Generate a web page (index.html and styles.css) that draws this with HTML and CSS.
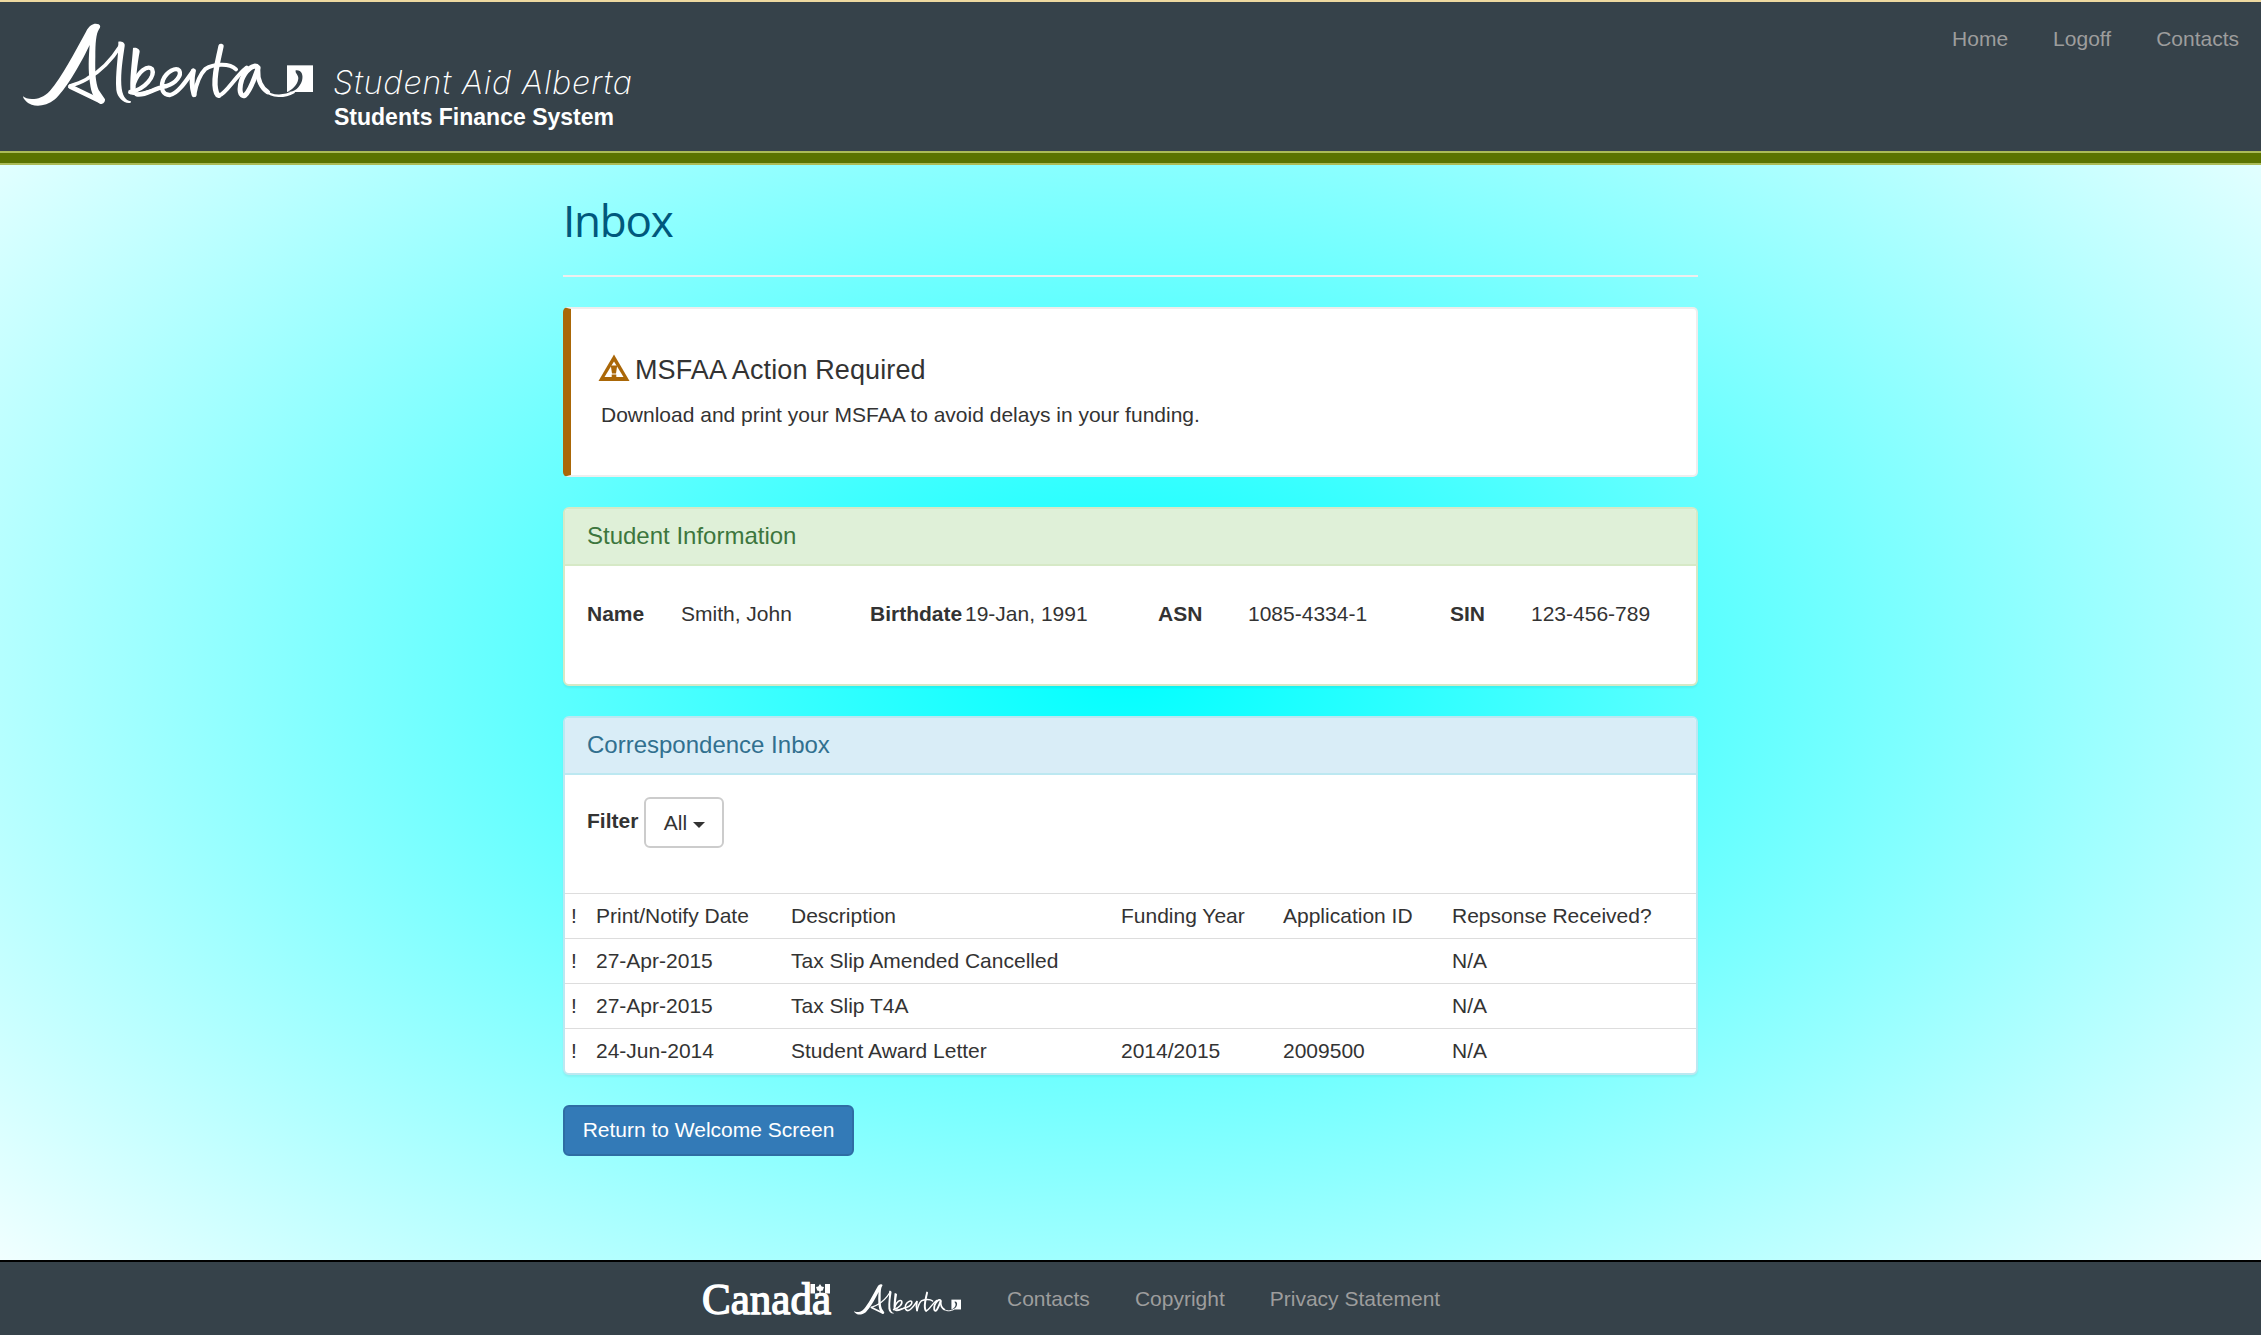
FILE: index.html
```html
<!DOCTYPE html>
<html lang="en">
<head>
<meta charset="utf-8">
<title>Inbox - Students Finance System</title>
<link rel="stylesheet" href="styles.css">
</head>
<body>
<svg class="symbols" aria-hidden="true">
  <symbol id="alberta" viewBox="66 69 876 252">
    <path d="M69,289 C80,300 120,305 150,272 C185,232 225,155 258,95 C270,72 284,69 296,73 C302,76 302,82 297,88 C288,102 286,130 286,170 C285,215 286,245 296,270 L315,298 C316,308 306,315 300,311 C285,302 273,280 270,250 C264,210 266,170 269,135 C235,205 195,270 165,298 C140,318 112,320 95,314 C82,310 70,298 69,289Z"/>
    <path d="M355,125 C365,124 376,128 374,138 C368,180 362,215 364,255 C366,285 376,302 393,304 L392,308 C375,313 352,295 349,270 C345,220 356,170 355,125Z"/>
    <path d="M399,144 C408,141 420,147 419,155 C412,190 407,240 407,270 L392,280 C388,240 396,190 399,144Z"/>
    <g fill="none" stroke="#fff" stroke-linecap="round" stroke-linejoin="round">
      <path stroke-width="14" d="M303,304 L211,260"/>
      <path stroke-width="11" d="M211,258 C225,252 245,247 262,236 C300,215 335,180 361,138"/>
      <path stroke-width="13" d="M402,250 C415,215 442,194 456,207 C466,228 436,268 391,276"/>
      <path stroke-width="8" d="M389,278 C412,290 450,270 490,262"/>
      <path stroke-width="13" d="M410,283 C440,288 455,266 500,258 C530,248 545,225 538,212 C528,200 500,215 489,240 C480,268 490,286 510,285 C535,280 560,240 580,212"/>
      <path stroke-width="15" d="M580,213 C575,235 575,260 582,284"/>
      <path stroke-width="12" d="M583,284 C588,255 598,225 616,207 C640,192 688,188 708,208"/>
      <path stroke-width="16" d="M663,139 C656,175 643,215 645,255 C646,272 650,284 656,286"/>
      <path stroke-width="12" d="M657,287 C680,280 705,230 740,203"/>
      <path stroke-width="15" d="M774,203 C762,188 735,212 725,240 C716,268 720,292 735,286 C752,272 762,235 774,206"/>
      <path stroke-width="14" d="M774,210 C772,240 785,265 803,276"/>
      <path stroke-width="8" d="M795,270 C815,294 855,290 881,276"/>
    </g>
    <path d="M861,196H939V276H861Z"/>
    <path fill="#36424a" d="M887,211 C904,209 911,224 906,242 C899,262 885,276 862,276 C884,265 894,250 895,235 C895,224 885,221 887,211Z"/>
  </symbol>
</svg>

<header class="site-header">
  <div class="brand">
    <svg class="brand-mark" role="img" aria-label="Alberta"><use href="#alberta"/></svg>
    <svg class="brand-name" viewBox="0 0 310 60">
      <text class="brand-aid" x="0" y="30" textLength="299" lengthAdjust="spacing">Student Aid Alberta</text>
      <text class="brand-system" x="1" y="61" textLength="280" lengthAdjust="spacingAndGlyphs">Students Finance System</text>
    </svg>
  </div>
  <nav class="top-nav">
    <a>Home</a><a>Logoff</a><a>Contacts</a>
  </nav>
</header>

<main class="container">
  <h1>Inbox</h1>

  <section class="callout">
    <h2><svg class="warning" viewBox="0 0 32 28"><path fill="#aa6708" d="M16,0.5 L31.5,27 H0.5Z"/><path fill="#fff" d="M16,7.5 L25.5,23 H6.5Z"/><path fill="#aa6708" d="M12.8,11.5 H19.2 L18,19.5 H14Z M13.7,20.5 H18.3 V23.5 H13.7Z"/></svg>MSFAA Action Required</h2>
    <p>Download and print your MSFAA to avoid delays in your funding.</p>
  </section>

  <section class="panel panel-success">
    <h3>Student Information</h3>
    <dl class="student">
      <dt>Name</dt><dd>Smith, John</dd>
      <dt>Birthdate</dt><dd>19-Jan, 1991</dd>
      <dt>ASN</dt><dd>1085-4334-1</dd>
      <dt>SIN</dt><dd>123-456-789</dd>
    </dl>
  </section>

  <section class="panel panel-info">
    <h3>Correspondence Inbox</h3>
    <div class="filter">
      <b>Filter</b>
      <button class="btn btn-default">All<span class="caret"></span></button>
    </div>
    <table>
      <colgroup><col class="c-flag"><col class="c-date"><col class="c-desc"><col class="c-year"><col class="c-app"><col></colgroup>
      <tr><td>!</td><td>Print/Notify Date</td><td>Description</td><td>Funding Year</td><td>Application ID</td><td>Repsonse Received?</td></tr>
      <tr><td>!</td><td>27-Apr-2015</td><td>Tax Slip Amended Cancelled</td><td></td><td></td><td>N/A</td></tr>
      <tr><td>!</td><td>27-Apr-2015</td><td>Tax Slip T4A</td><td></td><td></td><td>N/A</td></tr>
      <tr><td>!</td><td>24-Jun-2014</td><td>Student Award Letter</td><td>2014/2015</td><td>2009500</td><td>N/A</td></tr>
    </table>
  </section>

  <button class="btn btn-primary">Return to Welcome Screen</button>
</main>

<footer class="site-footer">
  <svg class="canada" viewBox="0 0 130 32" role="img" aria-label="Canada">
    <text x="0" y="30" textLength="129" lengthAdjust="spacingAndGlyphs">Canada</text>
    <path d="M108.5,0H113V9.5H108.5Z M123,0H128V9.5H123Z M118,0 L119.6,2.6 L122,3 L120.8,6.6 L118.7,7 V9.5 H117.3 V7 L115.2,6.6 L114,3 L116.4,2.6Z"/>
  </svg>
  <svg class="alberta-small" role="img" aria-label="Alberta"><use href="#alberta"/></svg>
  <nav class="foot-nav"><a>Contacts</a><a>Copyright</a><a>Privacy Statement</a></nav>
</footer>
</body>
</html>
```

FILE: styles.css
```css
* { box-sizing: border-box; }

body {
  margin: 0;
  height: 1335px;
  display: flex;
  flex-direction: column;
  font: 21px/30px "Liberation Sans", Arial, sans-serif;
  color: #333;
  background: radial-gradient(cyan, white);
}

.symbols { display: none; }

/* Header */
.site-header {
  height: 165px;
  flex: none;
  display: flex;
  justify-content: space-between;
  background: #36424a;
  border-top: 2px solid #eed9a0;
  box-shadow: inset 0 -2px #abbb58, inset 0 -12px #5a7300, inset 0 -14px #abbb58;
}
.brand { display: flex; padding: 21px 0 0 22px; gap: 19px; }
.brand-mark { width: 292px; height: 84px; fill: #fff; }
.brand-name { width: 310px; height: 60px; margin-top: 41px; fill: #fff; overflow: visible; }
.brand-aid { font: italic 200 32.5px Inter, sans-serif; }
.brand-system { font: bold 24px "Liberation Sans", sans-serif; }
.top-nav, .foot-nav { display: flex; gap: 45px; color: #9d9d9d; }
.top-nav { padding: 22px 22px 0 0; }

/* Page content */
.container { width: 1135px; margin: 0 auto; flex: 1; }
h1 {
  margin: 0 0 30px;
  height: 112px;
  padding: 25px 0 0;
  border-bottom: 2px solid #eee;
  font: 44px/60px "Open Sans", sans-serif;
  letter-spacing: -1.2px;
  color: #00587c;
}
.callout {
  height: 170px;
  margin-bottom: 30px;
  padding: 43px 27px 0;
  background: #fff;
  border: 2px solid #eee;
  border-left: 8px solid #aa6708;
  border-radius: 5px;
}
.callout h2 { display: flex; align-items: center; gap: 5px; margin: 0; font: 27px/36px "Liberation Sans", sans-serif; letter-spacing: .12px; }
.callout p { margin: 12px 0 0 3px; }
.warning { width: 32px; height: 28px; margin-top: -5px; }

.panel {
  margin-bottom: 30px;
  background: #fff;
  border: 2px solid;
  border-radius: 6px;
  box-shadow: 0 2px 2px rgba(0, 0, 0, .05);
  overflow: hidden;
}
.panel-success { height: 179px; border-color: #d6e9c6; }
.panel-info { height: 359px; border-color: #bce8f1; }
.panel h3 { margin: 0; height: 57px; padding: 13px 22px 0; font: 24px/27px "Liberation Sans", sans-serif; border-bottom: 2px solid; }
.panel-success h3 { color: #3c763d; background: #dff0d8; border-color: #d6e9c6; }
.panel-info h3 { color: #31708f; background: #d9edf7; border-color: #bce8f1; }

.student {
  display: grid;
  grid-template-columns: 94px 189px 95px 193px 90px 202px 81px 1fr;
  margin: 0;
  padding: 33px 0 0 22px;
}
dt { font-weight: bold; }
dd { margin: 0; }

.filter { height: 118px; padding: 22px 22px 0; display: flex; gap: 6px; }
.filter b { padding-top: 9px; }
.btn { font: 21px/30px "Liberation Sans", sans-serif; height: 51px; border-radius: 6px; padding: 0 17.5px; border: 2px solid; }
.btn-default { display: flex; align-items: center; gap: 6px; background: #fff; border-color: #ccc; color: #333; width: 80px; }
.caret { border: 6px solid transparent; border-top-color: #333; border-bottom: 0; margin-top: 4px; }
.btn-primary { display: block; width: 291px; padding-bottom: 2px; background: #337ab7; border-color: #2e6da4; color: #fff; }

table { width: 100%; table-layout: fixed; border-spacing: 0; }
td { height: 45px; padding: 0 7px; border-top: 1px solid #ddd; white-space: nowrap; }
td:first-child { padding-left: 6px; }
.c-flag { width: 24px; }
.c-date { width: 195px; }
.c-desc { width: 330px; }
.c-year { width: 162px; }
.c-app { width: 169px; }

/* Footer */
.site-footer {
  height: 75px;
  flex: none;
  display: flex;
  align-items: flex-start;
  padding: 22px 0 0 702px;
  background: #36424a;
  border-top: 2px solid #000;
}
.canada { width: 130px; height: 32px; fill: #fff; overflow: visible; }
.canada text { font: 45px "Liberation Serif", serif; stroke: #fff; stroke-width: 1.4; }
.alberta-small { width: 109px; height: 31px; margin-left: 21px; fill: #fff; }
.foot-nav { margin-left: 45px; }
```
